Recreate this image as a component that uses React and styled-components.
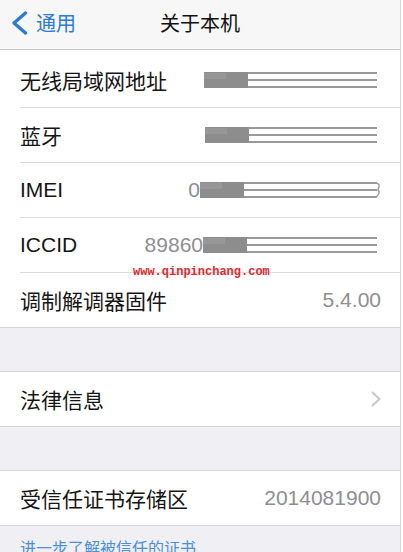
import React from 'react';
import styled, {createGlobalStyle} from 'styled-components';

const GlobalStyle = createGlobalStyle`
    html, body {
        margin: 0;
        padding: 0;
        background: #ffffff;
    }
    body {
        font-family: "Liberation Sans", "Noto Sans CJK SC", sans-serif;
        -webkit-font-smoothing: antialiased;
    }
`;

const Screen = styled.div`
    position: relative;
    width: 400px;
    min-height: 552px;
    border-right: 1px solid #d6d6d8;
    background: #efeff4;
    overflow: hidden;
`;

const NavBar = styled.header`
    display: grid;
    grid-template-columns: 1fr auto 1fr;
    align-items: center;
    height: 45px;
    padding-bottom: 4px;
    background: #f7f7f8;
    border-bottom: 1px solid #c8c8cc;
`;

const BackButton = styled.div`
    display: flex;
    align-items: center;
    gap: 8px;
    padding-left: 11px;
    color: #2b7bd6;
    font-size: 20px;
    font-family: "Noto Sans CJK SC", sans-serif;
`;

const Title = styled.h1`
    margin: 0;
    font-size: 20px;
    font-weight: 400;
    color: #111111;
    font-family: "Noto Sans CJK SC", sans-serif;
`;

const Group = styled.section`
    background: #ffffff;
    border-top: ${(p) => (p.$first ? 'none' : '1px solid #d4d4d8')};
    border-bottom: 1px solid #d4d4d8;
    margin-top: ${(p) => (p.$first ? '0' : '43px')};
`;

const Row = styled.div`
    padding-left: 20px;
    padding-top: ${(p) => (p.$first ? '3px' : '0')};
`;

const RowInner = styled.div`
    display: flex;
    align-items: center;
    justify-content: space-between;
    height: 54px;
    padding-right: 19px;
    border-bottom: ${(p) => (p.$last ? 'none' : '1px solid #dcdcdf')};
`;

const Label = styled.span`
    font-size: 21px;
    color: #151515;
`;

const Value = styled.span`
    display: flex;
    align-items: center;
    font-size: 21px;
    color: #8e8e92;
`;

const Footer = styled.div`
    padding: 10px 20px 0;
    font-size: 16px;
    line-height: 22px;
    color: #4a8fd8;
    font-family: "Noto Sans CJK SC", sans-serif;
`;

const Watermark = styled.div`
    position: absolute;
    top: 265px;
    left: 133px;
    font-family: "Liberation Mono", monospace;
    font-size: 12px;
    font-weight: bold;
    color: #e4262c;
    pointer-events: none;
`;

const BackChevron = () => (
    <svg width="17" height="24" viewBox="0 0 17 24">
        <path d="M14.5 2 L3 12 L14.5 22" fill="none" stroke="#2b7bd6" strokeWidth="3.4" strokeLinecap="round" strokeLinejoin="round"/>
    </svg>
);

const Chevron = () => (
    <svg width="10" height="16" viewBox="0 0 10 16">
        <path d="M1.5 1.5 L8.5 8 L1.5 14.5" fill="none" stroke="#c7c7cc" strokeWidth="2" strokeLinecap="round" strokeLinejoin="round"/>
    </svg>
);

// blurred-out value, drawn as the grey block and lines of the screenshot
const Redacted = ({width, tail}) => (
    <svg width={width} height="16" viewBox={`0 0 ${width} 16`}>
        <rect x="0" y="0" width="44" height="16" fill="#8d8d8d"/>
        <rect x="0" y="1" width="22" height="6" fill="#979797"/>
        <rect x="44" y="0" width={width - 48} height="2" fill="#999999"/>
        <rect x="44" y="7" width={width - 48} height="2" fill="#999999"/>
        <rect x="44" y="14" width={width - 48} height="2" fill="#999999"/>
        {tail && (
            <path d={`M${width - 5} 1 Q${width} 2 ${width - 3} 7.5 Q${width} 11 ${width - 5} 15`} fill="none" stroke="#999999" strokeWidth="1.5"/>
        )}
    </svg>
);

const rows = [
    {label: '无线局域网地址', prefix: '', width: 177},
    {label: '蓝牙', prefix: '', width: 176},
    {label: 'IMEI', prefix: '0', width: 181, tail: true},
    {label: 'ICCID', prefix: '89860', width: 178},
    {label: '调制解调器固件', value: '5.4.00'},
];

const App = () => {
    return (
        <Screen>
            <GlobalStyle/>
            <NavBar>
                <BackButton>
                    <BackChevron/>
                    <span>{'通用'}</span>
                </BackButton>
                <Title>{'关于本机'}</Title>
                <span/>
            </NavBar>

            <Group $first>
                {rows.map((r, i) => (
                    <Row key={r.label} $first={i === 0}>
                        <RowInner $last={i === rows.length - 1}>
                            <Label>{r.label}</Label>
                            {r.value ? (
                                <Value>{r.value}</Value>
                            ) : (
                                <Value>
                                    {r.prefix}
                                    <Redacted width={r.width} tail={r.tail}/>
                                </Value>
                            )}
                        </RowInner>
                    </Row>
                ))}
            </Group>

            <Group>
                <Row>
                    <RowInner $last>
                        <Label>{'法律信息'}</Label>
                        <Chevron/>
                    </RowInner>
                </Row>
            </Group>

            <Group>
                <Row>
                    <RowInner $last>
                        <Label>{'受信任证书存储区'}</Label>
                        <Value>{'2014081900'}</Value>
                    </RowInner>
                </Row>
            </Group>

            <Footer>{'进一步了解被信任的证书'}</Footer>

            <Watermark>{'www.qinpinchang.com'}</Watermark>
        </Screen>
    );
};

export default App;
